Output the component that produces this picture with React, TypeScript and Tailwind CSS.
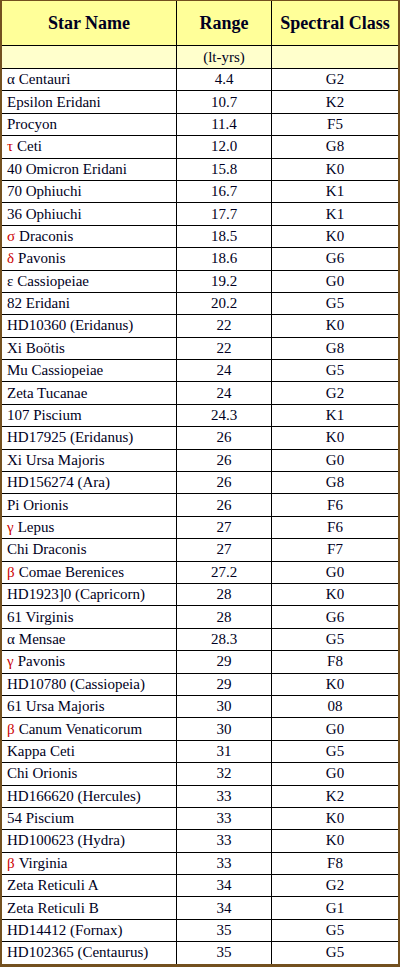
import React from "react";

type Row = { g?: string; red?: boolean; name: string; range: string; cls: string };

const rows: Row[] = [
  { g: "α", name: "Centauri", range: "4.4", cls: "G2" },
  { name: "Epsilon Eridani", range: "10.7", cls: "K2" },
  { name: "Procyon", range: "11.4", cls: "F5" },
  { g: "τ", red: true, name: "Ceti", range: "12.0", cls: "G8" },
  { name: "40 Omicron Eridani", range: "15.8", cls: "K0" },
  { name: "70 Ophiuchi", range: "16.7", cls: "K1" },
  { name: "36 Ophiuchi", range: "17.7", cls: "K1" },
  { g: "σ", red: true, name: "Draconis", range: "18.5", cls: "K0" },
  { g: "δ", red: true, name: "Pavonis", range: "18.6", cls: "G6" },
  { g: "ε", name: "Cassiopeiae", range: "19.2", cls: "G0" },
  { name: "82 Eridani", range: "20.2", cls: "G5" },
  { name: "HD10360 (Eridanus)", range: "22", cls: "K0" },
  { name: "Xi Boötis", range: "22", cls: "G8" },
  { name: "Mu Cassiopeiae", range: "24", cls: "G5" },
  { name: "Zeta Tucanae", range: "24", cls: "G2" },
  { name: "107 Piscium", range: "24.3", cls: "K1" },
  { name: "HD17925 (Eridanus)", range: "26", cls: "K0" },
  { name: "Xi Ursa Majoris", range: "26", cls: "G0" },
  { name: "HD156274 (Ara)", range: "26", cls: "G8" },
  { name: "Pi Orionis", range: "26", cls: "F6" },
  { g: "γ", red: true, name: "Lepus", range: "27", cls: "F6" },
  { name: "Chi Draconis", range: "27", cls: "F7" },
  { g: "β", red: true, name: "Comae Berenices", range: "27.2", cls: "G0" },
  { name: "HD1923]0 (Capricorn)", range: "28", cls: "K0" },
  { name: "61 Virginis", range: "28", cls: "G6" },
  { g: "α", name: "Mensae", range: "28.3", cls: "G5" },
  { g: "γ", red: true, name: "Pavonis", range: "29", cls: "F8" },
  { name: "HD10780 (Cassiopeia)", range: "29", cls: "K0" },
  { name: "61 Ursa Majoris", range: "30", cls: "08" },
  { g: "β", red: true, name: "Canum Venaticorum", range: "30", cls: "G0" },
  { name: "Kappa Ceti", range: "31", cls: "G5" },
  { name: "Chi Orionis", range: "32", cls: "G0" },
  { name: "HD166620 (Hercules)", range: "33", cls: "K2" },
  { name: "54 Piscium", range: "33", cls: "K0" },
  { name: "HD100623 (Hydra)", range: "33", cls: "K0" },
  { g: "β", red: true, name: "Virginia", range: "33", cls: "F8" },
  { name: "Zeta Reticuli A", range: "34", cls: "G2" },
  { name: "Zeta Reticuli B", range: "34", cls: "G1" },
  { name: "HD14412 (Fornax)", range: "35", cls: "G5" },
  { name: "HD102365 (Centaurus)", range: "35", cls: "G5" },
];

export default function App() {
  return (
    <div
      className="w-[400px] h-[967px] bg-[#73501f] pt-[1px] pl-[2px] pr-[2px] pb-[3px] text-[#000022]"
      style={{ fontFamily: '"Liberation Serif", "Times New Roman", serif' }}
    >
      <div className="h-full bg-white flex flex-col">
        <div className="grid grid-cols-[175px_95px_126px] h-[44px] bg-[#ffff99] text-[18px] font-bold">
          <div className="border-r border-black flex items-center justify-center">Star Name</div>
          <div className="border-r border-black flex items-center justify-center">Range</div>
          <div className="flex items-center justify-center">Spectral Class</div>
        </div>
        <div className="grid grid-cols-[175px_95px_126px] h-[23px] bg-[#ffffcc] border-t border-black text-[15px]">
          <div className="border-r border-black"></div>
          <div className="border-r border-black flex items-center justify-center">(lt-yrs)</div>
          <div></div>
        </div>
        {rows.map((r, i) => (
          <div
            key={i}
            className="grid grid-cols-[175px_95px_126px] h-[22.4px] border-t border-black text-[15px] leading-none"
          >
            <div className="border-r border-black flex items-center pl-[5px] whitespace-nowrap">
              {r.g && (
                <span className={r.red ? "text-[#cc0000] mr-[4px]" : "mr-[4px]"}>{r.g}</span>
              )}
              {r.name}
            </div>
            <div className="border-r border-black flex items-center justify-center">{r.range}</div>
            <div className="flex items-center justify-center">{r.cls}</div>
          </div>
        ))}
      </div>
    </div>
  );
}
